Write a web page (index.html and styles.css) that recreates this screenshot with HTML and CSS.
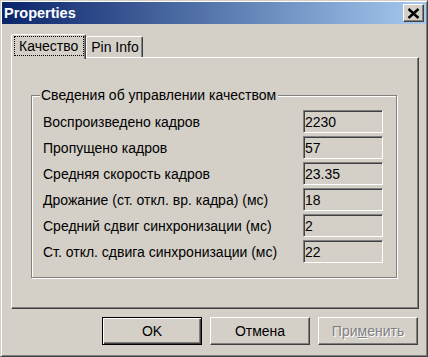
FILE: index.html
```html
<!DOCTYPE html>
<html lang="ru">
<head>
    <meta charset="UTF-8">
    <meta name="viewport" content="width=device-width, initial-scale=1.0">
    <title>Properties</title>
    <link rel="stylesheet" href="styles.css">
</head>
<body>
    <div class="window">
        <div class="titlebar">
            <span class="title">Properties</span>
            <button class="close-btn" aria-label="Close">
                <svg width="13" height="11" viewBox="0 0 13 11">
                    <path d="M1.5 1 L11.5 10 M11.5 1 L1.5 10" stroke="#000" stroke-width="2.4" fill="none"/>
                </svg>
            </button>
        </div>

        <div class="content">
            <div class="tabs">
                <div class="tab active"><span class="focus">Качество</span></div>
                <div class="tab">Pin Info</div>
            </div>

            <div class="panel">
                <div class="group">
                    <span class="legend">Сведения об управлении качеством</span>
                    <div class="rows">
                        <span class="label">Воспроизведено кадров</span>
                        <div class="field">2230</div>
                        <span class="label">Пропущено кадров</span>
                        <div class="field">57</div>
                        <span class="label">Средняя скорость кадров</span>
                        <div class="field">23.35</div>
                        <span class="label">Дрожание (ст. откл. вр. кадра) (мс)</span>
                        <div class="field">18</div>
                        <span class="label">Средний сдвиг синхронизации (мс)</span>
                        <div class="field">2</div>
                        <span class="label">Ст. откл. сдвига синхронизации (мс)</span>
                        <div class="field">22</div>
                    </div>
                </div>
            </div>

            <div class="buttons">
                <button class="btn default">OK</button>
                <button class="btn">Отмена</button>
                <button class="btn" disabled>При<u>м</u>енить</button>
            </div>
        </div>
    </div>
</body>
</html>
```

FILE: styles.css
```css
/* classic dialog */
body {
    margin: 0;
    padding: 0;
    background-color: #d4d0c8;
    font-family: "Liberation Sans", Arial, sans-serif;
    font-size: 14px;
    color: #000;
}
.window {
    width: 428px;
    height: 357px;
    box-sizing: border-box;
    padding: 1px;
    background-color: #d4d0c8;
    border: 1px solid;
    border-color: #d4d0c8 #404040 #404040 #d4d0c8;
    box-shadow: inset 1px 1px #fff, inset -1px -1px #808080;
}
.titlebar {
    height: 22px;
    display: flex;
    align-items: center;
    justify-content: space-between;
    padding: 0 2px 0 2px;
    background: linear-gradient(to right, #0a246a, #a6caf0);
}
.title {
    color: #fff;
    font-weight: bold;
    font-size: 14.5px;
}
.close-btn {
    width: 21px;
    height: 18px;
    padding: 0;
    display: flex;
    align-items: center;
    justify-content: center;
    background-color: #d4d0c8;
    border: 1px solid;
    border-color: #fff #404040 #404040 #fff;
    box-shadow: inset -1px -1px #808080;
}
.content {
    padding: 10px 7px 0 9px;
}
.tabs {
    display: flex;
    align-items: flex-end;
    height: 23px;
}
.tab {
    height: 21px;
    box-sizing: border-box;
    padding: 0 3px 0 4px;
    display: flex;
    align-items: center;
    border: 1px solid;
    border-bottom: none;
    border-color: #fff #404040 transparent #fff;
    border-radius: 2px 2px 0 0;
    box-shadow: inset -1px 0 #808080;
    background-color: #d4d0c8;
}
.tab.active {
    height: 25px;
    margin-bottom: -2px;
    padding: 0 2px 2px 3px;
    position: relative;
    z-index: 1;
}
.focus {
    display: block;
    padding: 1px 5px 1px 4px;
    outline: 1px dotted #000;
}
.panel {
    height: 252px;
    box-sizing: border-box;
    padding: 37px 21px 0 19px;
    border: 1px solid;
    border-color: #fff #404040 #404040 #fff;
    box-shadow: inset -1px -1px #808080;
}
.group {
    position: relative;
    padding: 14px 13px 14px 11px;
    border: 1px solid #808080;
    box-shadow: inset 1px 1px #fff, 1px 1px #fff;
}
.legend {
    position: absolute;
    top: -9px;
    left: 8px;
    padding: 0 2px 0 1px;
    background-color: #d4d0c8;
}
.rows {
    display: grid;
    grid-template-columns: 1fr 80px;
    grid-auto-rows: 23px;
    row-gap: 3px;
    align-items: center;
}
.field {
    height: 23px;
    box-sizing: border-box;
    padding: 0 2px 0 1px;
    display: flex;
    align-items: center;
    border: 1px solid;
    border-color: #808080 #fff #fff #808080;
    box-shadow: inset 1px 1px #404040;
}
.buttons {
    display: flex;
    justify-content: flex-end;
    gap: 8px;
    margin-top: 8px;
    padding-right: 1px;
}
.btn {
    width: 100px;
    height: 28px;
    padding: 0;
    font-family: inherit;
    font-size: 14px;
    color: #000;
    background-color: #d4d0c8;
    border: 1px solid;
    border-color: #fff #404040 #404040 #fff;
    box-shadow: inset -1px -1px #808080;
}
.btn.default {
    border-color: #000;
    box-shadow: inset 1px 1px #fff, inset -1px -1px #404040, inset -2px -2px #808080;
}
.btn:disabled {
    color: #808080;
    text-shadow: 1px 1px #fff;
}
```
